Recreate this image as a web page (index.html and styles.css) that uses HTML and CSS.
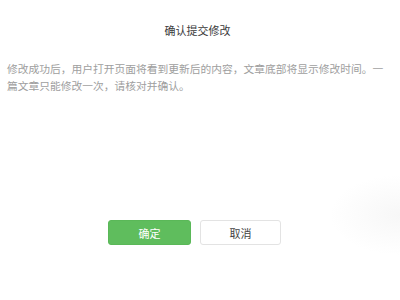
FILE: index.html
```html
<!DOCTYPE html>
<html lang="zh">
<head>
<meta charset="utf-8">
<link rel="stylesheet" href="styles.css">
</head>
<body>
<div class="dialog">
  <div class="title">确认提交修改</div>
  <p class="desc">修改成功后，用户打开页面将看到更新后的内容，文章底部将显示修改时间。一篇文章只能修改一次，请核对并确认。</p>
  <div class="actions">
    <button class="btn btn-primary">确定</button>
    <button class="btn btn-default">取消</button>
  </div>
</div>
</body>
</html>
```
FILE: styles.css
```css
html, body {
  margin: 0;
  padding: 0;
  background: #ffffff;
}
.dialog {
  width: 400px;
  height: 300px;
  box-sizing: border-box;
  padding: 22px 12px 0 7px;
  font-family: "Noto Sans CJK SC", "Noto Sans", sans-serif;
  background: radial-gradient(ellipse 70px 40px at 400px 215px, #f7f7f7, rgba(255,255,255,0));
}
.title {
  text-align: center;
  font-size: 11px;
  line-height: 16px;
  color: #3a3a3a;
}
.desc {
  margin: 22px 0 0 0;
  font-size: 10.75px;
  line-height: 17px;
  color: #9e9e9e;
}
.actions {
  display: flex;
  gap: 9px;
  margin-top: 126px;
  padding-left: 101px;
}
.btn {
  width: 83px;
  height: 25px;
  border-radius: 3px;
  font-family: inherit;
  font-size: 11px;
  padding: 0;
  cursor: pointer;
}
.btn-primary {
  background: #5fbd5d;
  border: 1px solid #5ab858;
  color: #ffffff;
}
.btn-default {
  width: 81px;
  background: #ffffff;
  border: 1px solid #e3e3e3;
  color: #444444;
}
```
